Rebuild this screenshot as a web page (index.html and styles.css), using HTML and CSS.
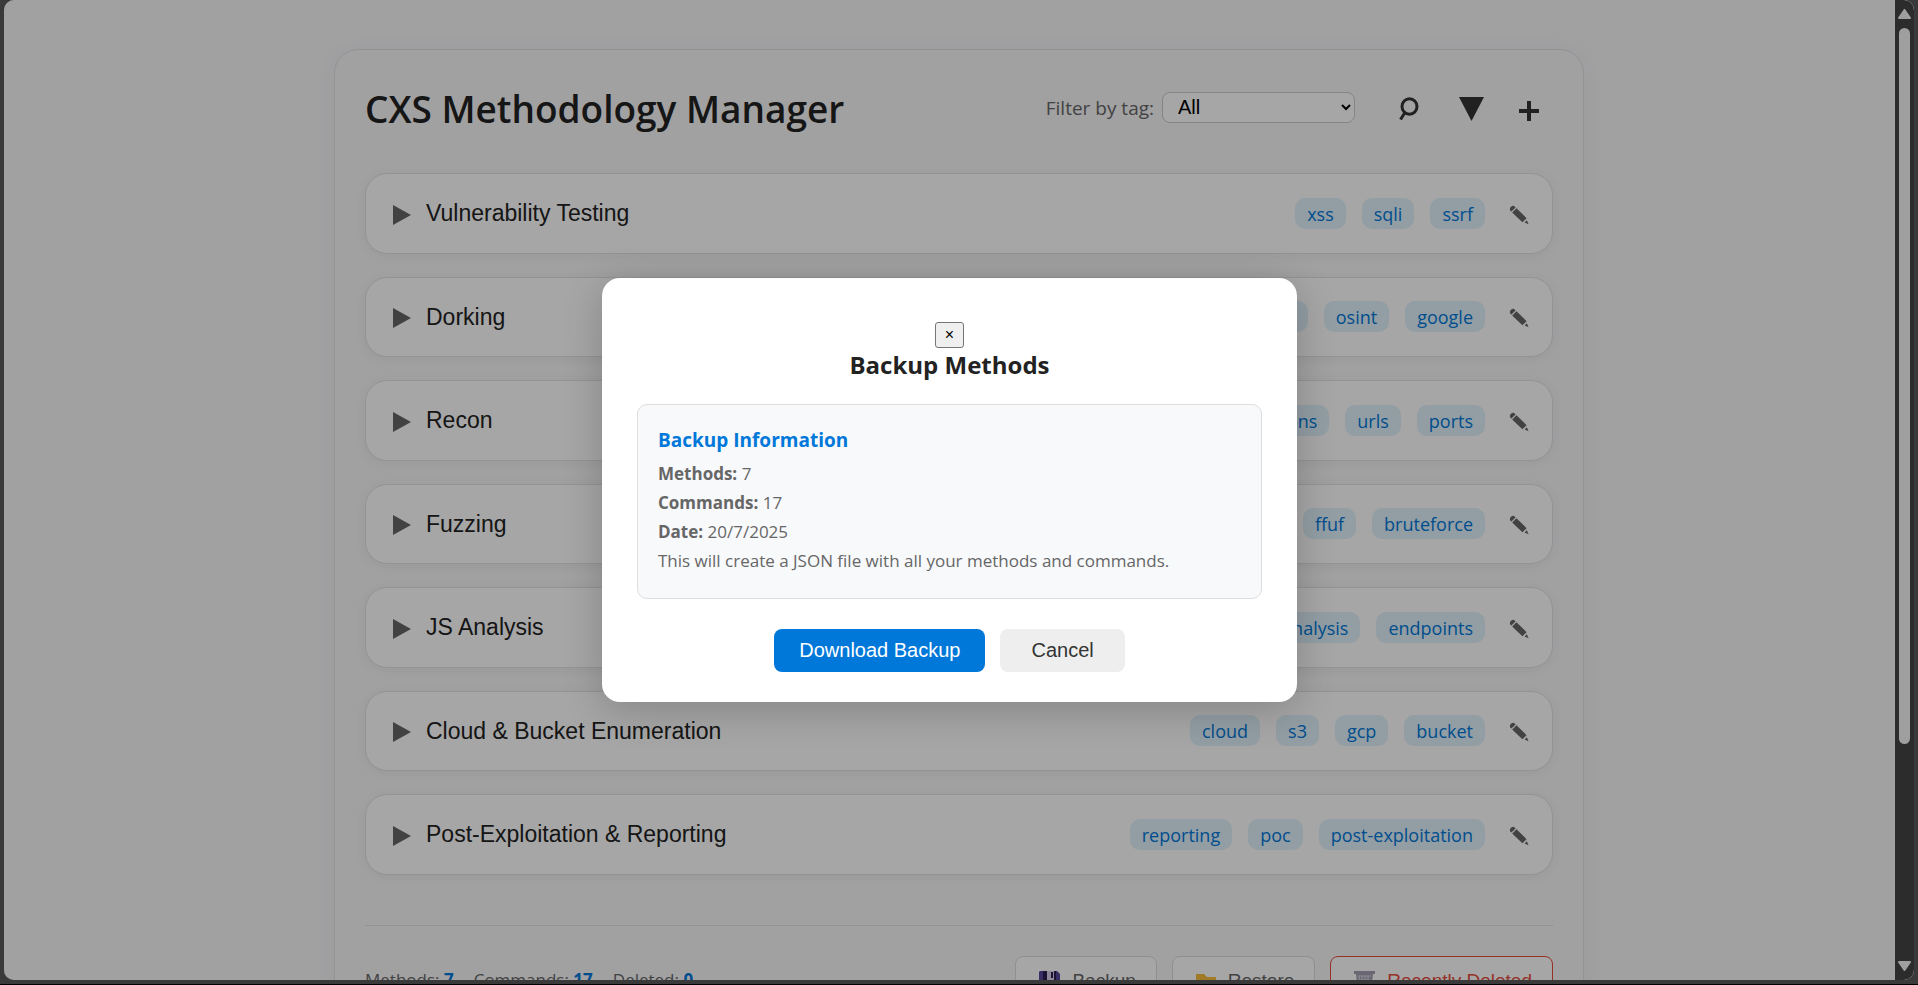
FILE: index.html
```html
<!DOCTYPE html>
<html lang="en">
<head>
<meta charset="utf-8">
<title>CXS Methodology Manager</title>
<link rel="stylesheet" href="styles.css">
</head>
<body>
<svg class="sprite" aria-hidden="true">
  <symbol id="pencil" viewBox="0 0 20 20"><path d="M.8 4.200Q1.200 1 4.800.8L6.600 2.400L2.400 6.600Q.8 5.600.8 4.200ZM3.200 7.500L7.500 3.200L17.600 13.200L13.400 17.200ZM15.600 17.400L17.800 15.200L19.600 19.200Z"/></symbol>
  <symbol id="play" viewBox="0 0 18 20"><path d="M0 0L18 10L0 20Z"/></symbol>
</svg>
<div class="window">
  <div class="viewport">
    <main class="container">
      <header class="header">
        <h1>CXS Methodology Manager</h1>
        <div class="tools">
          <label for="tag-filter">Filter by tag:</label>
          <select id="tag-filter"><option>All</option></select>
          <button class="tool search" aria-label="Search"><svg width="20" height="24" viewBox="0 0 20 24"><ellipse cx="10.500" cy="9.500" rx="7.500" ry="7.800"/><path d="M6 15.500L1.500 22.500"/></svg></button>
          <button class="tool solid" aria-label="Filter"><svg width="25" height="24" viewBox="0 0 25 24"><path d="M0 0H25L12.500 24Z"/></svg></button>
          <button class="tool add" aria-label="Add method"><svg width="20" height="20" viewBox="0 0 20 20"><path d="M10 0V20M0 10H20"/></svg></button>
        </div>
      </header>
      <section class="methods">
        <article class="method"><button class="toggle"><svg><use href="#play"/></svg>Vulnerability Testing</button><div class="tags"><span>xss</span><span>sqli</span><span>ssrf</span></div><button class="edit" aria-label="Edit"><svg><use href="#pencil"/></svg></button></article>
        <article class="method"><button class="toggle"><svg><use href="#play"/></svg>Dorking</button><div class="tags"><span>dorks</span><span>osint</span><span>google</span></div><button class="edit" aria-label="Edit"><svg><use href="#pencil"/></svg></button></article>
        <article class="method"><button class="toggle"><svg><use href="#play"/></svg>Recon</button><div class="tags"><span>subdomains</span><span>urls</span><span>ports</span></div><button class="edit" aria-label="Edit"><svg><use href="#pencil"/></svg></button></article>
        <article class="method"><button class="toggle"><svg><use href="#play"/></svg>Fuzzing</button><div class="tags"><span>ffuf</span><span>bruteforce</span></div><button class="edit" aria-label="Edit"><svg><use href="#pencil"/></svg></button></article>
        <article class="method"><button class="toggle"><svg><use href="#play"/></svg>JS Analysis</button><div class="tags"><span>analysis</span><span>endpoints</span></div><button class="edit" aria-label="Edit"><svg><use href="#pencil"/></svg></button></article>
        <article class="method"><button class="toggle"><svg><use href="#play"/></svg>Cloud &amp; Bucket Enumeration</button><div class="tags"><span>cloud</span><span>s3</span><span>gcp</span><span>bucket</span></div><button class="edit" aria-label="Edit"><svg><use href="#pencil"/></svg></button></article>
        <article class="method"><button class="toggle"><svg><use href="#play"/></svg>Post-Exploitation &amp; Reporting</button><div class="tags"><span>reporting</span><span>poc</span><span>post-exploitation</span></div><button class="edit" aria-label="Edit"><svg><use href="#pencil"/></svg></button></article>
      </section>
      <footer class="footer">
        <div class="stats"><span>Methods: <b>7</b></span><span>Commands: <b>17</b></span><span>Deleted: <b>0</b></span></div>
        <div class="actions">
          <button><svg width="21" height="20" viewBox="0 0 21 20"><path fill="#54489b" d="M1 0H18L21 3V20H0V1Z"/><path fill="#2b1d50" d="M4 0H17V10H4Z"/><path fill="#d9d3ea" d="M8 0H15V9H8Z"/><path fill="#2b1d50" d="M12 1H14V7H12Z"/></svg>Backup</button>
          <button><svg width="20" height="20" viewBox="0 0 20 20"><path fill="#f4bc3d" d="M0 3H8L11 6H20V19H0Z"/></svg>Restore</button>
          <button class="danger"><svg width="21" height="20" viewBox="0 0 21 20"><path fill="#a39fb0" d="M0 0H21V3H19L17 20H4L2 3H0Z"/><path fill="none" stroke="#dcd9e8" stroke-width="1" d="M4 5H17M5 5L6 17M8 5V17M11 5V17M14 5V17M5 9H16M5 13H16"/></svg>Recently Deleted</button>
        </div>
      </footer>
    </main>
    <div class="overlay">
      <div class="modal" role="dialog" aria-labelledby="modal-title">
        <button class="close" aria-label="Close">×</button>
        <h2 id="modal-title">Backup Methods</h2>
        <div class="info">
          <h3>Backup Information</h3>
          <p><b>Methods:</b> 7</p>
          <p><b>Commands:</b> 17</p>
          <p><b>Date:</b> 20/7/2025</p>
          <p>This will create a JSON file with all your methods and commands.</p>
        </div>
        <div class="modal-actions"><button class="primary">Download Backup</button><button class="cancel">Cancel</button></div>
      </div>
    </div>
    <div class="scrollbar" aria-hidden="true">
      <svg width="13" height="10" viewBox="0 0 13 10"><path d="M6.500 1L12 9H1Z"/></svg>
      <div class="track"><div class="thumb"></div></div>
      <svg width="13" height="10" viewBox="0 0 13 10"><path d="M1 1H12L6.500 9Z"/></svg>
    </div>
  </div>
</div>
</body>
</html>
```
FILE: styles.css
```css
* { box-sizing: border-box; }
body { margin: 0; background: #000; color: #222; font-family: "Open Sans", "Noto Sans", sans-serif; overflow: hidden; }
h1, h2, h3, p { margin: 0; }
button { font-family: "Liberation Sans", Arial, sans-serif; cursor: pointer; }
.sprite { position: absolute; width: 0; height: 0; }
.window { height: 100vh; padding: 0 4px 4px; background: #3a3a3a; border-bottom: 1px solid #000; }
.viewport { position: relative; height: 100%; overflow: hidden; border-radius: 10px; background: #f7f7f9; padding-top: 49px; }
.container { max-width: 1250px; margin: 0 auto; padding: 30px; border: 1px solid #e2e2e4; border-radius: 24px; background: #f7f7f9; box-shadow: 0 4px 24px rgba(0, 0, 0, 0.04); }
.header { display: flex; justify-content: space-between; align-items: flex-start; margin-bottom: 35px; }
h1 { font-size: 37px; line-height: 58px; font-weight: 600; }
.tools { display: flex; align-items: center; height: 58px; font-size: 19px; line-height: 28px; color: #666; }
.tools label { padding-bottom: 2px; }
.tools select { width: 193px; height: 31px; margin: 0 44px 4px 8px; padding: 0 0 0 11px; border: 1px solid #ccc; border-radius: 8px; background: #fff; color: #000; font: 20px "Liberation Sans", Arial, sans-serif; }
.tool { display: flex; padding: 0; margin-right: 40px; border: 0; background: none; }
.tool svg { fill: none; stroke: #333; stroke-width: 4; }
.tool.search svg { stroke-width: 3; }
.tool.solid { margin-right: 35px; }
.tool.solid svg { fill: #333; stroke: none; }
.tool.add { margin-right: 14px; padding-top: 4px; }
.methods { display: grid; gap: 23px; }
.method { display: flex; align-items: center; padding: 22px; border: 1px solid #e2e2e2; border-radius: 22px; background: #fff; box-shadow: 0 2px 12px rgba(0, 0, 0, 0.05); }
.toggle { display: flex; align-items: center; flex: 1; gap: 15px; padding: 0 5px; border: 0; background: none; color: #222; font-size: 23px; line-height: 1.5; text-align: left; }
.toggle svg { width: 18px; height: 20px; margin-top: 3px; fill: #666; }
.tags { display: flex; gap: 16px; margin-right: 24px; }
.tags span { padding: 2px 12px 1px; border-radius: 10px; background: #e0f2fc; color: #0078d9; font-size: 18px; line-height: 28px; }
.edit { display: flex; padding: 0; margin-right: 1px; border: 0; background: none; }
.edit svg { width: 20px; height: 20px; margin-top: 3px; fill: #666; }
.footer { display: flex; justify-content: space-between; align-items: center; margin-top: 50px; padding-top: 30px; border-top: 1px solid #e0e0e0; color: #666; font-size: 17px; }
.stats { display: flex; gap: 20px; padding-bottom: 2px; line-height: 24px; }
.stats b { color: #0078d9; }
.actions { display: flex; gap: 15px; }
.actions button { display: flex; align-items: center; gap: 12px; height: 50px; padding: 0 20px 0 23px; border: 1px solid #ddd; border-radius: 8px; background: #fff; color: #666; font-size: 19px; }
.actions .danger { border-color: #e74c3c; color: #e74c3c; }
.overlay { position: absolute; inset: 0 19px 0 0; display: flex; align-items: center; justify-content: center; background: rgba(0, 0, 0, 0.35); }
.modal { width: 695px; padding: 44px 35px 30px; border-radius: 18px; background: #fff; text-align: center; box-shadow: 0 8px 40px rgba(0, 0, 0, 0.2); }
.close { display: block; width: 29px; height: 26px; margin: 0 auto; padding: 0; border: 1px solid #767676; border-radius: 3px; background: #efefef; color: #000; font-size: 16px; }
h2 { font-size: 24px; line-height: 34px; margin-bottom: 22px; }
.info { padding: 20px 20px 23px; border: 1px solid #ddd; border-radius: 10px; background: #f8f9fb; color: #666; font-size: 17px; line-height: 29px; text-align: left; }
h3 { margin-bottom: 4px; color: #0078d9; font-size: 19px; line-height: 30px; }
.modal-actions { display: flex; justify-content: center; gap: 15px; margin-top: 30px; }
.modal-actions button { height: 43px; padding: 0 25px; border: 0; border-radius: 8px; font-size: 20px; }
.primary { background: #0078d9; color: #fff; }
.modal-actions .cancel { padding: 0 31px; background: #eee; color: #333; }
.scrollbar { position: absolute; inset: 0 0 0 auto; width: 19px; display: flex; flex-direction: column; align-items: center; gap: 9px; padding: 9px 0; background: #2c2c2c; }
.scrollbar svg { fill: #9f9f9f; stroke: #9f9f9f; stroke-width: 2; stroke-linejoin: round; }
.track { flex: 1; width: 11px; }
.thumb { height: 77.5%; border-radius: 6px; background: #9f9f9f; }
```
